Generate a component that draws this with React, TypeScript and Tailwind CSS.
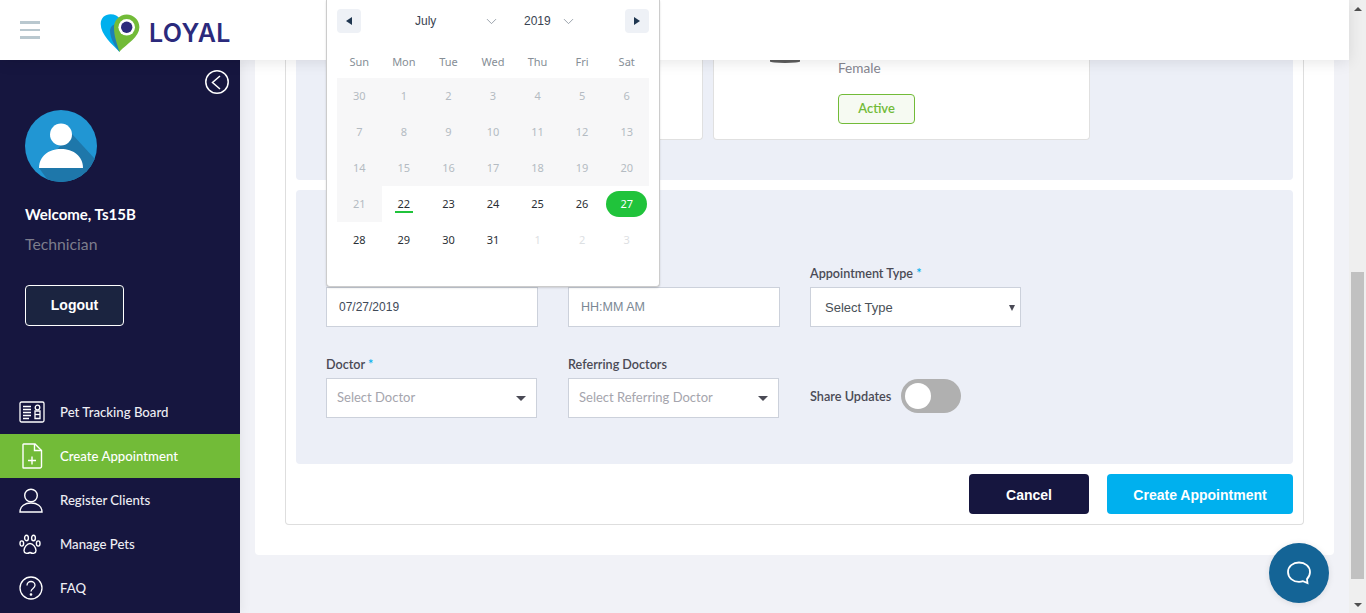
import { ChevronDown } from "lucide-react"

const weekDays = ["Sun", "Mon", "Tue", "Wed", "Thu", "Fri", "Sat"]

const weeks = [
  [30, 1, 2, 3, 4, 5, 6],
  [7, 8, 9, 10, 11, 12, 13],
  [14, 15, 16, 17, 18, 19, 20],
  [21, 22, 23, 24, 25, 26, 27],
  [28, 29, 30, 31, 1, 2, 3],
]

function Logo() {
  return (
    <svg width="42" height="40" viewBox="0 0 42 40">
      <path d="M19.3 38.7 C13 32 .7 22 .7 11 C.7 5 5 1.300 10.500 1.300 C15 1.300 18 3 20 6 L20 38 Z" fill="#00b0ee" />
      <path d="M19.3 38.7 C16 34 10 27 10 17 C11 12 15 10 18 12 L20 30 Z" fill="#1c7fb5" />
      <path d="M19.3 38.7 C17 30 14 24 14 14.300 C14 7.300 19.700 1.600 26.700 1.600 C33.700 1.600 39.400 7.300 39.400 14.300 C39.400 24 27 31 19.300 38.700 Z" fill="#72bb38" />
      <circle cx="26.700" cy="14.300" r="8.300" fill="#fff" />
      <circle cx="26.700" cy="14.300" r="5.700" fill="#2b2a7c" />
    </svg>
  )
}

function Avatar() {
  return (
    <svg width="72" height="72" viewBox="0 0 72 72">
      <defs>
        <clipPath id="avatar-clip">
          <circle cx="36" cy="36" r="36" />
        </clipPath>
      </defs>
      <circle cx="36" cy="36" r="36" fill="#2196d3" />
      <g clipPath="url(#avatar-clip)">
        <path d="M47 24 L80 60 L72 80 L30 80 L14 58 Z" fill="#1e77aa" />
      </g>
      <circle cx="36" cy="24.500" r="11" fill="#fff" />
      <path d="M14 58 C14 46 24 39 36 39 C48 39 58 46 58 58 Z" fill="#fff" />
    </svg>
  )
}

function TrackingIcon() {
  return (
    <svg width="26" height="22" viewBox="0 0 26 22" fill="none" stroke="#fff">
      <rect x="1" y="1" width="24" height="20" rx="1.500" strokeWidth="1.300" />
      <path d="M4 5.500h8M4 8.500h8M4 11.500h8M4 14.500h8M4 17.500h6" strokeWidth="1.500" />
      <circle cx="18.500" cy="6.500" r="2.300" strokeWidth="1.300" />
      <path d="M16 10h5v7.500h-5z" strokeWidth="1.300" />
      <path d="M16 13.500h5" strokeWidth="1.300" />
    </svg>
  )
}

function FileIcon() {
  return (
    <svg className="ml-[2px]" width="22" height="26" viewBox="0 0 22 26" fill="none" stroke="#fff" strokeWidth="1.400">
      <path d="M2.500 1h11.500l6.500 6.500v16a1.500 1.500 0 0 1-1.500 1.500h-16.500a.5.5 0 0 1-.5-.5v-23a.5.5 0 0 1 .5-.500z" />
      <path d="M13.500 1v6.500h7" />
      <path d="M11 13.500v8M7 17.500h8" />
    </svg>
  )
}

function UserIcon() {
  return (
    <svg width="24" height="25" viewBox="0 0 24 25" fill="none" stroke="#fff" strokeWidth="1.400">
      <circle cx="12" cy="7.500" r="6.300" />
      <path d="M1 24c0-6 5-9 11-9s11 3 11 9z" />
    </svg>
  )
}

function PawIcon() {
  return (
    <svg width="22" height="21" viewBox="0 0 22 21" fill="none" stroke="#fff" strokeWidth="1.400">
      <ellipse cx="7.500" cy="4" rx="1.900" ry="2.800" />
      <ellipse cx="14.500" cy="4" rx="1.900" ry="2.800" />
      <ellipse cx="2.800" cy="9.500" rx="1.800" ry="2.600" />
      <ellipse cx="19.200" cy="9.500" rx="1.800" ry="2.600" />
      <path d="M11 9.500c3 0 6 4 6 7 0 3-3 3.500-6 2-3 1.500-6 1-6-2 0-3 3-7 6-7z" />
    </svg>
  )
}

function HelpIcon() {
  return (
    <svg width="24" height="24" viewBox="0 0 24 24" fill="none" stroke="#fff" strokeWidth="1.300">
      <circle cx="12" cy="12" r="11" />
      <path d="M8 9.500c0-2.500 2-4 4-4s4 1.500 4 3.800c0 3-4 3.200-4 6.200" />
      <circle cx="12" cy="18.500" r=".7" fill="#fff" />
    </svg>
  )
}

const navItems = [
  { label: "Pet Tracking Board", icon: <TrackingIcon /> },
  { label: "Create Appointment", icon: <FileIcon />, active: true },
  { label: "Register Clients", icon: <UserIcon /> },
  { label: "Manage Pets", icon: <PawIcon /> },
  { label: "FAQ", icon: <HelpIcon /> },
]

function Sidebar() {
  return (
    <aside className="relative z-[1] w-[240px] shrink-0 h-[553px] bg-[#16163f] flex flex-col shadow-[2px_0_10px_rgba(0,0,0,0.06)]">
      <div className="flex justify-end pt-[10px] pr-[11px]">
        <svg width="24" height="24" viewBox="0 0 24 24" fill="none" stroke="#fff" strokeWidth="1.500">
          <circle cx="12" cy="12" r="11.200" />
          <path d="M15 6 7.500 12.500 15 19" />
        </svg>
      </div>
      <div className="pl-[25px] pt-[16px]">
        <Avatar />
        <p className="mt-[22px] text-[15px] leading-[20px] font-bold text-white">Welcome, Ts15B</p>
        <p className="mt-[10px] text-[15.750px] leading-[20px] text-[#7d7d8c]">Technician</p>
        <button className="mt-[31px] w-[99px] h-[41px] rounded border border-white bg-[#1b2440] text-white text-[14px] font-bold font-['Liberation_Sans',sans-serif]">
          Logout
        </button>
      </div>
      <nav className="mt-[64px]">
        {navItems.map((item) => (
          <div
            key={item.label}
            className={`h-[44px] flex items-center pl-[19px] text-[13.200px] font-medium ${
              item.active ? "bg-[#72bb38] text-white" : "text-[#eeeef4]"
            }`}
          >
            <span className="w-[41px] flex">{item.icon}</span>
            <span className="mt-[1px]">{item.label}</span>
          </div>
        ))}
      </nav>
    </aside>
  )
}

function DatePicker() {
  return (
    <div className="absolute left-[326px] top-0 z-20 w-[334px] h-[287px] bg-white border border-t-0 border-[#ccc] rounded-b shadow-[0_1px_2px_rgba(0,0,0,0.15)] px-[10px] font-['Noto_Sans',sans-serif]">
      <div className="h-[42px] pt-[9px] flex items-start justify-between">
        <span className="w-[24px] h-[24px] rounded bg-[#eef1f6] flex items-center justify-center">
          <span className="border-y-[4px] border-y-transparent border-r-[6px] border-r-[#1f3650]" />
        </span>
        <div className="flex-1 flex items-center text-[12px] text-[#3a4452] h-[24px] font-['Liberation_Sans',sans-serif]">
          <span className="ml-[54px] w-[67.500px]">July</span>
          <ChevronDown size={17} strokeWidth={1.200} className="text-[#8a949e]" />
          <span className="ml-[24.500px] w-[35.500px]">2019</span>
          <ChevronDown size={17} strokeWidth={1.200} className="text-[#8a949e]" />
        </div>
        <span className="w-[24px] h-[24px] rounded bg-[#eef1f6] flex items-center justify-center">
          <span className="border-y-[4px] border-y-transparent border-l-[6px] border-l-[#1f3650]" />
        </span>
      </div>
      <div className="grid grid-cols-7 h-[36px] pt-[4px] items-center text-center text-[11px] text-[#868e96]">
        {weekDays.map((d) => (
          <span key={d}>{d}</span>
        ))}
      </div>
      {weeks.map((week, w) => (
        <div key={w} className="grid grid-cols-7 h-[36px]">
          {week.map((day, d) => {
            const past = w < 3 || (w === 3 && d === 0)
            const next = w === 4 && d > 3
            const selected = w === 3 && d === 6
            const today = w === 3 && d === 1
            return (
              <div
                key={d}
                className={`relative flex items-center justify-center text-[11px] ${
                  past ? "bg-[#f7f7f8] text-[#b4bbc2]" : next ? "text-[#dde0e3]" : "text-[#2a2f35]"
                }`}
              >
                {selected ? (
                  <span className="w-[41px] h-[26px] rounded-full bg-[#20c33b] text-white flex items-center justify-center">
                    {day}
                  </span>
                ) : (
                  day
                )}
                {today && <span className="absolute left-[13px] top-[25px] w-[18px] h-[2px] bg-[#20c33b]" />}
              </div>
            )
          })}
        </div>
      ))}
    </div>
  )
}

function Label({ text, required }: { text: string; required?: boolean }) {
  return (
    <p className="h-[20px] pt-[1px] text-[12.600px] leading-[20px] text-[#4a4a55] font-semibold">
      {text}
      {required && <span className="text-[#00b0ee]"> *</span>}
    </p>
  )
}

function SelectBox({ placeholder, label, required }: { placeholder: string; label: string; required?: boolean }) {
  return (
    <div className="w-[211px]">
      <Label text={label} required={required} />
      <div className="mt-[4px] h-[40px] bg-white border border-[#ccd1db] flex items-center justify-between pl-[10px] pr-[10px]">
        <span className="text-[13px] text-[#a5a5ad]">{placeholder}</span>
        <span className="border-x-[5px] border-x-transparent border-t-[5px] border-t-[#4a4a55]" />
      </div>
    </div>
  )
}

function Main() {
  return (
    <main className="flex-1 min-w-0 h-[553px] bg-[#f1f2f7] pl-[15px] pr-[15px]">
      <div className="h-[495px] bg-white rounded-b px-[30px] pb-[30px]">
        <div className="h-full border border-t-0 border-[#dedede] rounded-b px-[10px] pb-[9px] flex flex-col">
          <section className="h-[120px] bg-[#eceff7] rounded-b flex gap-[10px] pl-[31px]">
            <div className="w-[376px] h-[80px] bg-white rounded-b border border-t-0 border-[#e0e0e0]" />
            <div className="w-[377px] h-[80px] bg-white rounded-b border border-t-0 border-[#e0e0e0] pl-[124px] relative">
              <span className="absolute left-[56px] top-0 w-[30px] h-[3px] rounded-b-[100%] bg-[#5c5c5c]" />
              <p className="text-[13.600px] leading-[16px] text-[#85858f]">Female</p>
              <span className="mt-[18px] w-[77px] h-[30px] rounded border border-[#72bb38] bg-[#f6faf2] text-[#72bb38] text-[13px] font-semibold flex items-center justify-center">
                Active
              </span>
            </div>
          </section>
          <section className="mt-[10px] h-[274px] bg-[#eceff7] rounded pl-[30px] pt-[73px]">
            <div className="flex gap-[30px]">
              <div className="w-[212px]">
                <Label text="Date" required />
                <div className="mt-[4px] h-[40px] bg-white border border-[#ccd1db] flex items-center pl-[12px] text-[12px] text-[#3f4a58] font-['Liberation_Sans',sans-serif]">
                  07/27/2019
                </div>
              </div>
              <div className="w-[212px]">
                <Label text="Time" />
                <div className="mt-[4px] h-[40px] pt-[1px] bg-white border border-[#ccd1db] flex items-center pl-[12px] text-[12.500px] text-[#7b8794] font-['Liberation_Sans',sans-serif]">
                  HH:MM AM
                </div>
              </div>
              <div className="w-[211px]">
                <Label text="Appointment Type" required />
                <div className="mt-[4px] h-[40px] pt-[1px] bg-white border border-[#ccd1db] flex items-center justify-between pl-[14px] pr-[5px] text-[13px] text-[#495057] font-['Liberation_Sans',sans-serif]">
                  Select Type
                  <span className="border-x-[3.500px] border-x-transparent border-t-[6px] border-t-[#4a4a55]" />
                </div>
              </div>
            </div>
            <div className="mt-[27px] flex items-start gap-[31px]">
              <SelectBox label="Doctor" placeholder="Select Doctor" required />
              <SelectBox label="Referring Doctors" placeholder="Select Referring Doctor" />
              <div className="h-[59px] flex items-center gap-[10px] pt-[25px]">
                <span className="pt-[2px] text-[12.700px] text-[#4a4a55] font-semibold">Share Updates</span>
                <span className="w-[60px] h-[34px] rounded-full bg-[#b0b0b0] flex items-center pl-[4px]">
                  <span className="w-[26px] h-[26px] rounded-full bg-white" />
                </span>
              </div>
            </div>
          </section>
          <div className="mt-[10px] flex justify-end gap-[18px] font-['Liberation_Sans',sans-serif]">
            <button className="w-[120px] h-[40px] pt-[2px] rounded bg-[#16163f] text-white text-[14px] font-bold">Cancel</button>
            <button className="w-[186px] h-[40px] pt-[2px] rounded bg-[#00b0ee] text-white text-[14px] font-bold">
              Create Appointment
            </button>
          </div>
        </div>
      </div>
    </main>
  )
}

export default function App() {
  return (
    <div className="relative w-[1366px] h-[613px] overflow-hidden flex font-['Lato',sans-serif]">
      <div className="flex-1 min-w-0 flex flex-col">
        <header className="relative z-10 h-[60px] bg-white shadow-[0_2px_14px_rgba(0,0,0,0.1)] flex items-center pl-[20px]">
          <div className="w-[20px] flex flex-col gap-[5px]">
            <span className="h-[2.500px] bg-[#b9c8cf]" />
            <span className="h-[2.500px] bg-[#b9c8cf]" />
            <span className="h-[2.500px] bg-[#b9c8cf]" />
          </div>
          <div className="ml-[60px] mt-[6px] flex items-center gap-[7px]">
            <Logo />
            <span className="text-[25px] font-semibold tracking-[0.4px] text-[#2b2a7c] leading-none font-['Inter',sans-serif]">LOYAL</span>
          </div>
        </header>
        <div className="flex">
          <Sidebar />
          <Main />
        </div>
      </div>
      <div className="w-[17px] h-full bg-[#efefef] flex flex-col">
        <span className="h-[17px] flex items-center justify-center">
          <span className="border-x-[4px] border-x-transparent border-b-[4px] border-b-[#505050]" />
        </span>
        <span className="mt-[255px] mx-[2px] h-[307px] bg-[#c1c1c1]" />
        <span className="mt-auto h-[17px] flex items-center justify-center">
          <span className="border-x-[4px] border-x-transparent border-t-[4px] border-t-[#505050]" />
        </span>
      </div>
      <DatePicker />
      <button className="absolute z-30 left-[1269px] top-[543px] w-[60px] h-[60px] rounded-full bg-[#146496] shadow-[0_1px_6px_rgba(0,0,0,0.1)] flex items-center justify-center">
        <svg width="26" height="26" viewBox="0 0 26 26" fill="none" stroke="#fff" strokeWidth="1.800">
          <path d="M13 2.500c6 0 11 3.800 11 9.500 0 3-1.300 5.300-3 7l.5 4-4.500-1.800c-1.200.400-2.600.600-4 .600-6 0-11-4-11-9.800s5-9.500 11-9.500z" />
        </svg>
      </button>
    </div>
  )
}
